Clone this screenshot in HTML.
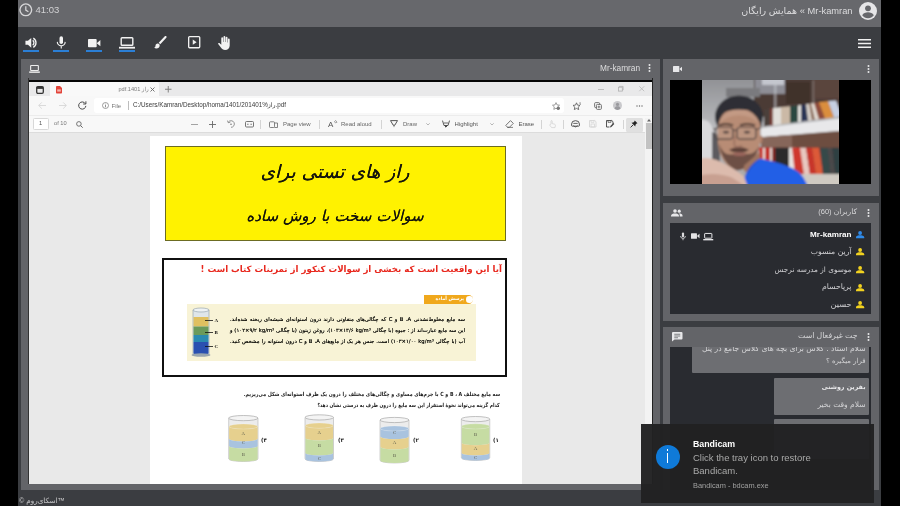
<!DOCTYPE html>
<html lang="fa">
<head>
<meta charset="utf-8">
<title>Skyroom</title>
<style>
*{box-sizing:border-box;margin:0;padding:0}
html,body{width:900px;height:506px;overflow:hidden;background:#000}
body{position:relative;font-family:"Liberation Sans","DejaVu Sans",sans-serif;color:#ddd;font-size:9px}
.abs{position:absolute}
#app{position:absolute;left:18px;top:0;width:863px;height:506px;background:#3b3d41;overflow:hidden;filter:blur(.45px)}
#notif{filter:blur(.4px)}
#topbar{position:absolute;left:0;top:0;width:863px;height:27px;background:#67686c}
#toolbar{position:absolute;left:0;top:27px;width:863px;height:32px;background:#3b3d41}
.panel{position:absolute;background:#636468}
.dark{position:absolute;background:#292b30}
.ul{position:absolute;height:2.200px;width:15.500px;top:23.300px;background:#2b7fd6}
svg{position:absolute;overflow:visible}
.rtl{direction:rtl;unicode-bidi:embed}
.t{position:absolute;white-space:nowrap;line-height:1}
</style>
</head>
<body>
<div id="app">
<!-- TOPBAR -->
<div id="topbar">
  <svg style="left:.6px;top:2.800px" width="13.600" height="13.600" viewBox="0 0 13 13"><circle cx="6.5" cy="6.5" r="5.6" fill="none" stroke="#d6d6d8" stroke-width="1.3"/><path d="M6.5 3.2V6.8L9 8.3" fill="none" stroke="#d6d6d8" stroke-width="1.2"/></svg>
  <div class="t" style="left:17.5px;top:5px;font-size:9.5px;color:#d2d2d4">41:03</div>
  <div class="t rtl" style="right:28.5px;top:5.5px;font-size:9.5px;color:#dcdcde"><span dir="ltr" style="font-size:9.300px">Mr-kamran</span> » همایش رایگان</div>
  <svg style="left:840.5px;top:1.5px" width="18" height="18" viewBox="0 0 18 18"><circle cx="9" cy="9" r="9" fill="#e6e6e8"/><circle cx="9" cy="6.3" r="2.9" fill="#67686c"/><path d="M3.2 13.2c1.2-2.2 3.4-3 5.8-3s4.6.8 5.8 3c-1.4 1.9-3.4 3-5.8 3s-4.4-1.100-5.800-3z" fill="#67686c"/></svg>
</div>
<!-- TOOLBAR -->
<div id="toolbar">
  <!-- speaker -->
  <svg style="left:6.800px;top:9.700px" width="12.500" height="11.600" viewBox="0 0 14 13"><path d="M0.500 4.300h2.800L7 1v11L3.300 8.700H0.500z" fill="#f2f2f2"/><path d="M8.600 3.800a3.300 3.300 0 0 1 0 5.400M9.300 1.300a6 6 0 0 1 0 10.400" fill="none" stroke="#f2f2f2" stroke-width="1.500"/></svg>
  <div class="ul" style="left:5px"></div>
  <!-- mic -->
  <svg style="left:38px;top:8.500px" width="10.500" height="13.500" viewBox="0 0 12 15"><rect x="4" y="0" width="4" height="9" rx="2" fill="#f2f2f2"/><path d="M1.500 6.500a4.500 4.500 0 0 0 9 0M6 11v3" fill="none" stroke="#f2f2f2" stroke-width="1.300"/></svg>
  <div class="ul" style="left:35px"></div>
  <!-- camera -->
  <svg style="left:70px;top:11.500px" width="12.400" height="8.400" viewBox="0 0 15 10"><rect x="0" y="0" width="10.500" height="10" rx="1" fill="#f2f2f2"/><path d="M10.500 5L15 1.200v7.600z" fill="#f2f2f2"/></svg>
  <div class="ul" style="left:68px"></div>
  <!-- laptop -->
  <svg style="left:101px;top:10px" width="16" height="12" viewBox="0 0 16 12"><rect x="2.200" y="0.700" width="11.600" height="7.600" rx="0.800" fill="none" stroke="#f2f2f2" stroke-width="1.400"/><rect x="0" y="9.800" width="16" height="1.800" fill="#f2f2f2"/></svg>
  <div class="ul" style="left:101px"></div>
  <!-- brush -->
  <svg style="left:136px;top:9px" width="13" height="13" viewBox="0 0 13 13"><path d="M12.300 0.300c.5.500.5 1 0 1.500L6.300 8.300 4.700 6.700 10.800 0.300c.5-.4 1-.4 1.500 0z" fill="#f2f2f2"/><path d="M3.700 7.600c1.200 0 2 .9 2 2 0 1.800-1.600 3-3.200 3-1 0-1.900-.4-2.500-1 .9 0 1.500-.700 1.500-1.800 0-1.200.9-2.200 2.200-2.200z" fill="#f2f2f2"/></svg>
  <!-- play box -->
  <svg style="left:169.700px;top:9.300px" width="12.400" height="12.400" viewBox="0 0 13 13"><rect x="0.700" y="0.700" width="11.600" height="11.600" rx="1" fill="none" stroke="#f2f2f2" stroke-width="1.400"/><path d="M5 3.800L9 6.500 5 9.200z" fill="#f2f2f2"/></svg>
  <!-- hand -->
  <svg style="left:199.500px;top:8.500px" width="13" height="14" viewBox="0 0 13 14"><path d="M3.300 2.200a.9.900 0 0 1 1.800 0V6h.4V1a.9.900 0 0 1 1.800 0v5h.4V1.700a.9.900 0 0 1 1.800 0V6.500h.4V3.500a.9.900 0 0 1 1.800 0V9.500c0 2.700-1.800 4.500-4.600 4.500-2 0-3.200-.8-4.200-2.400L.2 7.900c-.3-.6.500-1.300 1.200-.8l1.900 1.700z" fill="#f2f2f2"/></svg>
  <!-- hamburger -->
  <svg style="left:840px;top:11.500px" width="13" height="9" viewBox="0 0 13 9"><path d="M0 .8h13M0 4.500h13M0 8.200h13" stroke="#f0f0f0" stroke-width="1.500"/></svg>
</div>

<!-- MAIN PANEL -->
<div class="panel" id="main" style="left:3px;top:58.700px;width:638.700px;height:431.800px"></div>

<!-- main panel header -->
<svg style="left:11px;top:64.700px" width="11" height="8" viewBox="0 0 16 12"><rect x="2.200" y="0.700" width="11.600" height="7.600" rx="0.800" fill="none" stroke="#ececec" stroke-width="1.700"/><rect x="0" y="9.600" width="16" height="2.200" fill="#ececec"/></svg>
<div class="t" style="left:582px;top:63.500px;font-size:8.300px;color:#dededf">Mr-kamran</div>
<svg style="left:630px;top:63px" width="3" height="10" viewBox="0 0 3 10"><circle cx="1.500" cy="1.900" r="1" fill="#e8e8ea"/><circle cx="1.500" cy="5" r="1" fill="#e8e8ea"/><circle cx="1.500" cy="8.100" r="1" fill="#e8e8ea"/></svg>
<!-- BROWSER -->
<div id="br" class="abs" style="left:10px;top:78px;width:624.500px;height:405.500px;background:#f8f8f8;border-left:.5px solid #333;border-right:.8px solid #222;overflow:hidden;color:#444;font-size:6.200px">
 <div class="abs" style="left:-1px;top:0;width:627px;height:1.800px;background:#636468"></div>
 <div class="abs" style="left:-1px;top:1.800px;width:627px;height:2.200px;background:#060606"></div>
 <div class="abs" id="tabbar" style="left:0;top:3.600px;width:625px;height:14.400px;background:#e9e9ea"></div>
 <div class="abs" style="left:21px;top:4px;width:109px;height:13.500px;background:#f9f9f9;border-radius:2px 2px 0 0"></div>
 <div class="abs" id="addr" style="left:0;top:17.500px;width:623px;height:19px;background:#f8f8f8"></div>
 <div class="abs" style="left:65px;top:19.500px;width:470px;height:15px;background:#fff;border-radius:3px"></div>
 <div class="abs" id="ptb" style="left:0;top:36.500px;width:623px;height:18.500px;background:#f8f8f8;border-top:1px solid #ececec;border-bottom:1px solid #dcdcdc"></div>
 <div class="abs" id="pdfbg" style="left:0;top:55px;width:615.500px;height:350.500px;background:#e9e9e9"></div>
 <div class="abs" id="sb" style="left:615.500px;top:39.500px;width:8px;height:366px;background:#f3f3f3"></div>
 <div class="abs" style="left:616.500px;top:44.500px;width:6.500px;height:26px;background:#c2c2c2"></div>
 <svg style="left:6.50px;top:7.50px" width="8" height="8" viewBox="0 0 8 8"><rect x=".7" y=".7" width="6.600" height="6.600" rx="1.200" fill="none" stroke="#333" stroke-width="1.300"/><rect x=".7" y=".7" width="6.600" height="2.200" fill="#333"/></svg><svg style="left:27.00px;top:7.75px" width="6" height="7.5" viewBox="0 0 6 7.5"><path d="M0 .8Q0 0 .8 0H4L6 2V6.700Q6 7.500 5.200 7.500H.8Q0 7.500 0 6.700z" fill="#e2443a"/><rect x="1.200" y="3.400" width="3.600" height="2.200" fill="#f6b4ae"/></svg><div class="t rtl" style="left:89.500px;top:8.5px;font-size:5.600px;color:#7a7a7a;direction:ltr">pdf.1401 راز</div><svg style="left:121.00px;top:9.00px" width="5" height="5" viewBox="0 0 5 5"><path d="M.5 .5L4.500 4.500M4.500 .5L.5 4.500" stroke="#666" stroke-width=".9"/></svg><svg style="left:135.75px;top:8.25px" width="6.5" height="6.5" viewBox="0 0 6.5 6.5"><path d="M3.250 0V6.500M0 3.250H6.500" stroke="#777" stroke-width=".9"/></svg><svg style="left:568.50px;top:10.50px" width="6" height="1" viewBox="0 0 6 1"><path d="M0 .5H6" stroke="#b8b8b8" stroke-width=".9"/></svg><svg style="left:588.75px;top:8.25px" width="5.5" height="5.5" viewBox="0 0 5.5 5.5"><rect x=".4" y="1.200" width="3.900" height="3.900" fill="none" stroke="#b0b0b0" stroke-width=".8"/><path d="M1.500 1.200V.4H5.100V4H4.300" fill="none" stroke="#b0b0b0" stroke-width=".8"/></svg><svg style="left:609.75px;top:8.25px" width="5.5" height="5.5" viewBox="0 0 5.5 5.5"><path d="M.3 .3L5.200 5.200M5.200 .3L.3 5.200" stroke="#b8b8b8" stroke-width=".8"/></svg>
 <svg style="left:8.80px;top:24.00px" width="8" height="7" viewBox="0 0 8 7"><path d="M8 3.500H.8M3.800 .4L.7 3.500 3.800 6.600" fill="none" stroke="#d6d6d6" stroke-width=".9"/></svg><svg style="left:30.00px;top:24.00px" width="8" height="7" viewBox="0 0 8 7"><path d="M0 3.500H7.200M4.200 .4L7.300 3.500 4.200 6.600" fill="none" stroke="#d6d6d6" stroke-width=".9"/></svg><svg style="left:49.25px;top:23.25px" width="8.5" height="8.5" viewBox="0 0 8.5 8.5"><path d="M7.300 2.600A3.600 3.600 0 1 0 7.850 4.900" fill="none" stroke="#4a4a4a" stroke-width="1"/><path d="M7.900 .3V3H5.200" fill="none" stroke="#4a4a4a" stroke-width="1"/></svg><svg style="left:72.50px;top:24.00px" width="7" height="7" viewBox="0 0 7 7"><circle cx="3.500" cy="3.500" r="3" fill="none" stroke="#777" stroke-width=".7"/><path d="M3.500 3V5.300M3.500 1.700V2.400" stroke="#777" stroke-width=".8"/></svg><div class="t" style="left:82.5px;top:24.50px;font-size:6px;color:#777;">File</div><div class="abs" style="left:98.5px;top:23.0px;width:1px;height:9px;background:#bdbdbd"></div><div class="t" style="left:104px;top:24.2px;font-size:6.300px;color:#3a3a3a;direction:ltr">C:/Users/Kamran/Desktop/homa/1401/201401%راز.pdf</div><svg style="left:523.00px;top:23.50px" width="8" height="8" viewBox="0 0 8 8"><path d="M4 .6L5 2.900 7.500 3.200 5.700 4.900 6.200 7.400 4 6.200 1.800 7.400 2.300 4.900 .5 3.200 3 2.900z" fill="none" stroke="#777" stroke-width=".7"/><circle cx="6.300" cy="6.200" r="1.700" fill="#777"/></svg><svg style="left:543.50px;top:23.50px" width="8" height="8" viewBox="0 0 8 8"><path d="M3.500 .8L4.500 3.100 7 3.400 5.200 5.100 5.700 7.600 3.500 6.400 1.300 7.600 1.800 5.100 0 3.400 2.500 3.100z" fill="none" stroke="#555" stroke-width=".8"/><path d="M6.200 1H8M6.800 2.300H8" stroke="#555" stroke-width=".6"/></svg><svg style="left:564.50px;top:23.50px" width="8" height="8" viewBox="0 0 8 8"><rect x=".6" y=".6" width="5" height="5" rx="1" fill="none" stroke="#555" stroke-width=".8"/><rect x="2.400" y="2.400" width="5" height="5" rx="1" fill="#f8f8f8" stroke="#555" stroke-width=".8"/><path d="M4.900 3.600V6.200M3.600 4.900H6.200" stroke="#555" stroke-width=".7"/></svg><svg style="left:584.00px;top:23.00px" width="9" height="9" viewBox="0 0 9 9"><circle cx="4.500" cy="4.500" r="4.500" fill="#c9c9cc"/><circle cx="4.500" cy="3.400" r="1.600" fill="#9a9a9e"/><path d="M1.500 7.600C2 5.700 3.200 5.300 4.500 5.300S7 5.700 7.500 7.600A4.300 4.300 0 0 1 1.500 7.600z" fill="#9a9a9e"/></svg><svg style="left:607.00px;top:26.50px" width="7" height="2" viewBox="0 0 7 2"><circle cx="1" cy="1" r=".7" fill="#666"/><circle cx="3.500" cy="1" r=".7" fill="#666"/><circle cx="6" cy="1" r=".7" fill="#666"/></svg>
 <div class="abs" style="left:4px;top:39.800px;width:15.500px;height:12.400px;background:#fff;border:1px solid #d8d8d8;border-radius:1.500px"></div><div class="t" style="left:10px;top:43.400px;font-size:5.800px;color:#555;">1</div><div class="t" style="left:25px;top:43.400px;font-size:5.700px;color:#777;">of 10</div><svg style="left:46.50px;top:42.50px" width="7" height="7" viewBox="0 0 7 7"><circle cx="2.900" cy="2.900" r="2.300" fill="none" stroke="#666" stroke-width=".9"/><path d="M4.600 4.600L6.700 6.700" stroke="#666" stroke-width="1"/></svg><svg style="left:162.00px;top:45.50px" width="7" height="1" viewBox="0 0 7 1"><path d="M0 .5H7" stroke="#999" stroke-width=".9"/></svg><svg style="left:180.00px;top:42.50px" width="7" height="7" viewBox="0 0 7 7"><path d="M0 3.500H7M3.500 0V7" stroke="#666" stroke-width=".9"/></svg><svg style="left:197.50px;top:42.00px" width="8" height="8" viewBox="0 0 8 8"><path d="M1.300 2.200A3.300 3.300 0 1 1 4 7.300" fill="none" stroke="#777" stroke-width=".8"/><path d="M.5 .6L1.200 2.700 3.300 2.200" fill="none" stroke="#777" stroke-width=".8"/><circle cx="4" cy="4.200" r=".8" fill="#777"/></svg><svg style="left:215.50px;top:42.75px" width="9" height="6.5" viewBox="0 0 9 6.5"><rect x=".5" y=".5" width="8" height="5.500" rx="1" fill="none" stroke="#666" stroke-width=".9"/><path d="M2 3.250H3.600M5.400 3.250H7" stroke="#666" stroke-width=".8"/></svg><div class="abs" style="left:231px;top:41.5px;width:1px;height:9px;background:#d4d4d4"></div><svg style="left:239.50px;top:42.50px" width="9" height="7" viewBox="0 0 9 7"><rect x=".5" y=".8" width="5" height="5.700" rx=".8" fill="none" stroke="#666" stroke-width=".8"/><path d="M5.500 2H8.500V6.500H5.500" fill="none" stroke="#666" stroke-width=".8"/></svg><div class="t" style="left:254px;top:43.400px;font-size:6px;color:#666;">Page view</div><div class="abs" style="left:289.5px;top:41.5px;width:1px;height:9px;background:#d4d4d4"></div><svg style="left:298.50px;top:42.25px" width="9" height="7.5" viewBox="0 0 9 7.5"><text x="0" y="6.800" font-size="8" fill="#555" font-family="Liberation Sans,sans-serif">A</text><path d="M6.300 1.200A2 2 0 0 1 7.300 3.200M7.300 .2A3.500 3.500 0 0 1 8.800 3" fill="none" stroke="#555" stroke-width=".6"/></svg><div class="t" style="left:312px;top:43.400px;font-size:6px;color:#666;">Read aloud</div><div class="abs" style="left:351.5px;top:41.5px;width:1px;height:9px;background:#d4d4d4"></div><svg style="left:361.00px;top:42.00px" width="8" height="8" viewBox="0 0 8 8"><path d="M.5 .6H7.500L4.800 5.200H3.200z" fill="none" stroke="#444" stroke-width=".9"/><path d="M3.400 5.400L4 7.600 4.600 5.400" fill="#444"/></svg><div class="t" style="left:374px;top:43.400px;font-size:6px;color:#666;">Draw</div><svg style="left:397.00px;top:44.75px" width="4" height="2.5" viewBox="0 0 4 2.5"><path d="M.3 .3L2 2 3.700 .3" fill="none" stroke="#999" stroke-width=".7"/></svg><svg style="left:412.50px;top:42.00px" width="8" height="8" viewBox="0 0 8 8"><path d="M.5 .6L2 5.500H6L7.500 .6" fill="none" stroke="#444" stroke-width=".9"/><path d="M2 3H6" stroke="#444" stroke-width=".8"/><path d="M3 5.500V7.500L5 6.800V5.500" fill="#444"/></svg><div class="t" style="left:425.5px;top:43.400px;font-size:6px;color:#555;">Highlight</div><svg style="left:461.00px;top:44.75px" width="4" height="2.5" viewBox="0 0 4 2.5"><path d="M.3 .3L2 2 3.700 .3" fill="none" stroke="#999" stroke-width=".7"/></svg><svg style="left:475.50px;top:42.00px" width="9" height="8" viewBox="0 0 9 8"><path d="M5.500 .6L8.300 3.400 4.400 7.300H2.600L.8 5.400z" fill="none" stroke="#555" stroke-width=".8"/><path d="M2.200 7.400H8" stroke="#555" stroke-width=".7"/></svg><div class="t" style="left:489.5px;top:43.400px;font-size:6px;color:#555;">Erase</div><div class="abs" style="left:511.5px;top:41.5px;width:1px;height:9px;background:#d4d4d4"></div><svg style="left:520.00px;top:41.50px" width="7" height="8" viewBox="0 0 7 8"><path d="M2 4V1.200a.6.6 0 0 1 1.200 0V3.600L5.600 4.200c.6.200.9.600.8 1.200L6 7.600H2.600L.8 5.200c-.3-.5.300-1 .8-.6z" fill="none" stroke="#cfcfcf" stroke-width=".7"/></svg><div class="abs" style="left:534px;top:41.5px;width:1px;height:9px;background:#d4d4d4"></div><svg style="left:542.00px;top:42.00px" width="9" height="8" viewBox="0 0 9 8"><path d="M.6 4A3.500 3 0 0 1 8.400 4V5.500Q8.400 6.200 7.600 6.200H1.400Q.6 6.200 .6 5.500z" fill="none" stroke="#444" stroke-width=".9"/><path d="M2.300 3.400H6.700" stroke="#444" stroke-width=".8"/><path d="M2.600 5.400C3.500 7.400 5.500 7.400 6.400 5.400" fill="none" stroke="#444" stroke-width=".8"/></svg><svg style="left:560.25px;top:42.25px" width="7.5" height="7.5" viewBox="0 0 7.5 7.5"><path d="M.5 .5H5.800L7 1.700V7H.5z" fill="none" stroke="#d2d2d2" stroke-width=".8"/><rect x="2" y="4" width="3.500" height="3" fill="none" stroke="#d2d2d2" stroke-width=".7"/><path d="M2 .5V2.300H5V.5" fill="none" stroke="#d2d2d2" stroke-width=".7"/></svg><svg style="left:577.25px;top:42.00px" width="8.5" height="8" viewBox="0 0 8.5 8"><path d="M.5 .5H5.800L7 1.700V4M3.500 7H.5V.5" fill="none" stroke="#444" stroke-width=".9"/><path d="M2 .5V2.300H5V.5" fill="none" stroke="#444" stroke-width=".7"/><path d="M4 7.600L4.400 6 7.300 3.100 8.300 4.100 5.400 7z" fill="#444"/></svg><div class="abs" style="left:593.5px;top:41.5px;width:1px;height:9px;background:#d4d4d4"></div><div class="abs" style="left:596.500px;top:39.500px;width:17.500px;height:14px;background:#e0e0e0;border-radius:1.500px"></div><svg style="left:601.00px;top:42.00px" width="8" height="8" viewBox="0 0 8 8"><path d="M4.700 .5L7.500 3.300 6.600 3.600 5.500 4.700 5.300 6.500 1.500 2.700 3.300 2.500 4.400 1.400z" fill="#222"/><path d="M3 5L.6 7.400" stroke="#222" stroke-width=".9"/></svg><svg style="left:617.50px;top:41.25px" width="4" height="2.5" viewBox="0 0 4 2.5"><path d="M0 2.500L2 0 4 2.500z" fill="#666"/></svg>
 <div id="pg" class="abs" style="left:121px;top:58px;width:372px;height:348px;background:#fff;font-family:'DejaVu Sans','Liberation Sans',sans-serif">
  <div class="abs" style="left:14.500px;top:9.500px;width:341px;height:95.500px;background:#fff200;border:1px solid #6c6c22"></div>
  <div class="t rtl" id="t1" style="left:14.500px;width:341px;text-align:center;top:27px;font-size:18.600px;color:#15150c;font-style:italic;text-shadow:0 0 .5px #15150c">راز های تستی برای</div>
  <div class="t rtl" id="t2" style="left:14.500px;width:341px;text-align:center;top:73px;font-size:15.100px;color:#15150c;font-style:italic;text-shadow:0 0 .5px #15150c">سوالات سخت با روش ساده</div>
  <div class="abs" style="left:12px;top:122px;width:345px;height:119px;border:2.200px solid #101010;background:#fff"></div>
  <div class="t rtl" id="rh" style="right:20px;top:128.500px;font-size:8.640px;font-weight:bold;color:#e8281e">آیا این واقعیت است که بخشی از سوالات کنکور از تمرینات کتاب است !</div>
  <div class="abs" style="left:36.500px;top:167.500px;width:289px;height:57.500px;background:#f8f3d6"></div>
  <div class="abs" style="left:274px;top:158.500px;width:49px;height:9.500px;background:#f0a81c;border-radius:0 5px 5px 0"></div>
  <div class="abs" style="left:316px;top:160px;width:6.500px;height:6.500px;background:#fff;border-radius:50%"></div>
  <div class="t rtl" style="right:58px;top:160.500px;font-size:4.600px;font-weight:bold;color:#fff">پرسش آماده</div>
  <div class="t rtl" id="c1" style="right:57px;width:235px;text-align:justify;text-align-last:justify;top:180.500px;font-size:5.300px;color:#14140f;text-shadow:0 0 .35px #14140f">سه مایع مخلوط‌نشدنی <span dir="ltr">A</span>، <span dir="ltr">B</span> و <span dir="ltr">C</span> که چگالی‌های متفاوتی دارند درون استوانه‌ای شیشه‌ای ریخته شده‌اند.</div>
  <div class="t rtl" id="c2" style="right:57px;width:235px;text-align:justify;text-align-last:justify;top:191.500px;font-size:5.300px;color:#14140f;text-shadow:0 0 .35px #14140f">این سه مایع عبارت‌اند از : جیوه (با چگالی <span dir="ltr">kg/m³</span> ۱۳/۶×۱۰۳)، روغن زیتون (با چگالی <span dir="ltr">kg/m³</span> ۹/۲×۱۰۲) و</div>
  <div class="t rtl" id="c3" style="right:57px;width:235px;text-align:justify;text-align-last:justify;top:202.500px;font-size:5.300px;color:#14140f;text-shadow:0 0 .35px #14140f">آب (با چگالی <span dir="ltr">kg/m³</span> ۱/۰۰×۱۰۳) است. جنس هر یک از مایع‌های <span dir="ltr">A</span>، <span dir="ltr">B</span> و <span dir="ltr">C</span> درون استوانه را مشخص کنید.</div>
  <div class="t rtl" id="q1" style="right:22px;top:255.500px;font-size:5.600px;transform:scaleX(.843);transform-origin:100% 50%;font-weight:bold;color:#1c1c1c">سه مایع مختلف <span dir="ltr">A</span> ، <span dir="ltr">B</span> و <span dir="ltr">C</span> با جرم‌های مساوی و چگالی‌های مختلف را درون یک ظرف استوانه‌ای شکل می‌ریزیم.</div>
  <div class="t rtl" id="q2" style="right:22px;top:266.500px;font-size:5.600px;transform:scaleX(.797);transform-origin:100% 50%;font-weight:bold;color:#1c1c1c">کدام گزینه می‌تواند نحوهٔ استقرار این سه مایع را درون ظرف به درستی نشان دهد؟</div>
  <div class="t rtl" style="left:343px;top:302px;font-size:5.500px;font-weight:bold;color:#222">۱)</div>
  <div class="t rtl" style="left:263px;top:302px;font-size:5.500px;font-weight:bold;color:#222">۲)</div>
  <div class="t rtl" style="left:188px;top:302px;font-size:5.500px;font-weight:bold;color:#222">۳)</div>
  <div class="t rtl" style="left:111px;top:302px;font-size:5.500px;font-weight:bold;color:#222">۴)</div>
  <svg style="left:0;top:0" width="372" height="348" viewBox="0 0 372 348"><g><path d="M78.7 282.1V322.9A14.65 2.6 0 0 0 108.0 322.9V282.1z" fill="#ececec" stroke="#b4b4b4" stroke-width=".6"/><path d="M79.10000000000001 290.5V302.8A14.25 2.6 0 0 0 107.6 302.8V290.5A14.25 2.6 0 0 1 79.10000000000001 290.5z" fill="#e6d08e"/><path d="M79.10000000000001 302.8V309.9A14.25 2.6 0 0 0 107.6 309.9V302.8A14.25 2.6 0 0 1 79.10000000000001 302.8z" fill="#a9c3df"/><path d="M79.10000000000001 309.9V322.9A14.25 2.6 0 0 0 107.6 322.9V309.9A14.25 2.6 0 0 1 79.10000000000001 309.9z" fill="#c6dca3"/><ellipse cx="93.35000000000001" cy="290.5" rx="14.25" ry="2.6" fill="#e6d08e" stroke="#fff" stroke-opacity=".35" stroke-width=".5"/><ellipse cx="93.35000000000001" cy="282.1" rx="14.65" ry="2.6" fill="#f4f4f4" stroke="#a8a8a8" stroke-width=".7"/></g><g><path d="M155 281.40000000000003V322.9A14.25 2.6 0 0 0 183.5 322.9V281.40000000000003z" fill="#ececec" stroke="#b4b4b4" stroke-width=".6"/><path d="M155.4 289.6V301.9A13.85 2.6 0 0 0 183.1 301.9V289.6A13.85 2.6 0 0 1 155.4 289.6z" fill="#e6d08e"/><path d="M155.4 301.9V317A13.85 2.6 0 0 0 183.1 317V301.9A13.85 2.6 0 0 1 155.4 301.9z" fill="#c6dca3"/><path d="M155.4 317V322.9A13.85 2.6 0 0 0 183.1 322.9V317A13.85 2.6 0 0 1 155.4 317z" fill="#a9c3df"/><ellipse cx="169.25" cy="289.6" rx="13.85" ry="2.6" fill="#e6d08e" stroke="#fff" stroke-opacity=".35" stroke-width=".5"/><ellipse cx="169.25" cy="281.40000000000003" rx="14.25" ry="2.6" fill="#f4f4f4" stroke="#a8a8a8" stroke-width=".7"/></g><g><path d="M230 284.0V324.4A14.5 2.6 0 0 0 259 324.4V284.0z" fill="#ececec" stroke="#b4b4b4" stroke-width=".6"/><path d="M230.4 292.5V300.6A14.1 2.6 0 0 0 258.6 300.6V292.5A14.1 2.6 0 0 1 230.4 292.5z" fill="#a9c3df"/><path d="M230.4 300.6V310.8A14.1 2.6 0 0 0 258.6 310.8V300.6A14.1 2.6 0 0 1 230.4 300.6z" fill="#e6d08e"/><path d="M230.4 310.8V324.4A14.1 2.6 0 0 0 258.6 324.4V310.8A14.1 2.6 0 0 1 230.4 310.8z" fill="#c6dca3"/><ellipse cx="244.5" cy="292.5" rx="14.1" ry="2.6" fill="#a9c3df" stroke="#fff" stroke-opacity=".35" stroke-width=".5"/><ellipse cx="244.5" cy="284.0" rx="14.5" ry="2.6" fill="#f4f4f4" stroke="#a8a8a8" stroke-width=".7"/></g><g><path d="M311.3 283.1V321.9A14.25 2.6 0 0 0 339.8 321.9V283.1z" fill="#ececec" stroke="#b4b4b4" stroke-width=".6"/><path d="M311.7 290.4V306.7A13.85 2.6 0 0 0 339.40000000000003 306.7V290.4A13.85 2.6 0 0 1 311.7 290.4z" fill="#c6dca3"/><path d="M311.7 306.7V317A13.85 2.6 0 0 0 339.40000000000003 317V306.7A13.85 2.6 0 0 1 311.7 306.7z" fill="#e6d08e"/><path d="M311.7 317V321.9A13.85 2.6 0 0 0 339.40000000000003 321.9V317A13.85 2.6 0 0 1 311.7 317z" fill="#a9c3df"/><ellipse cx="325.55" cy="290.4" rx="13.85" ry="2.6" fill="#c6dca3" stroke="#fff" stroke-opacity=".35" stroke-width=".5"/><ellipse cx="325.55" cy="283.1" rx="14.25" ry="2.6" fill="#f4f4f4" stroke="#a8a8a8" stroke-width=".7"/></g><text x="93.3" y="298.5" font-size="4.800" text-anchor="middle" fill="#5a5a4a" font-family="Liberation Serif,serif">A</text><text x="93.3" y="308" font-size="4.800" text-anchor="middle" fill="#5a5a4a" font-family="Liberation Serif,serif">C</text><text x="93.3" y="319.5" font-size="4.800" text-anchor="middle" fill="#5a5a4a" font-family="Liberation Serif,serif">B</text><text x="169.3" y="297.5" font-size="4.800" text-anchor="middle" fill="#5a5a4a" font-family="Liberation Serif,serif">A</text><text x="169.3" y="311" font-size="4.800" text-anchor="middle" fill="#5a5a4a" font-family="Liberation Serif,serif">B</text><text x="169.3" y="323.5" font-size="4.800" text-anchor="middle" fill="#5a5a4a" font-family="Liberation Serif,serif">C</text><text x="244.5" y="298" font-size="4.800" text-anchor="middle" fill="#5a5a4a" font-family="Liberation Serif,serif">C</text><text x="244.5" y="307.5" font-size="4.800" text-anchor="middle" fill="#5a5a4a" font-family="Liberation Serif,serif">A</text><text x="244.5" y="320.5" font-size="4.800" text-anchor="middle" fill="#5a5a4a" font-family="Liberation Serif,serif">B</text><text x="325.5" y="300" font-size="4.800" text-anchor="middle" fill="#5a5a4a" font-family="Liberation Serif,serif">B</text><text x="325.5" y="313.5" font-size="4.800" text-anchor="middle" fill="#5a5a4a" font-family="Liberation Serif,serif">A</text><text x="325.5" y="322.8" font-size="4.800" text-anchor="middle" fill="#5a5a4a" font-family="Liberation Serif,serif">C</text><g><path d="M43 174V217.500A8 2 0 0 0 59 217.500V174z" fill="#dfe6ea" stroke="#8a9aa6" stroke-width=".6"/><rect x="43.500" y="181" width="15" height="9.500" fill="#e0c060"/><rect x="43.500" y="190.500" width="15" height="8.500" fill="#6a9a5a"/><rect x="43.500" y="199" width="15" height="7" fill="#2a8ab0"/><path d="M43.500 206V217.300A7.500 1.800 0 0 0 58.500 217.300V206z" fill="#2a50b0"/><ellipse cx="51" cy="174" rx="8" ry="2" fill="#eef2f4" stroke="#8a9aa6" stroke-width=".6"/><ellipse cx="51" cy="219" rx="9.500" ry="1.800" fill="#9aa6ae"/><path d="M55 184.500H63M55 196.500H63M55 210.500H63" stroke="#111" stroke-width=".8"/></g><text x="64.500" y="186.300" font-size="5" font-weight="bold" fill="#111" font-family="Liberation Serif,serif">A</text><text x="64.500" y="198.300" font-size="5" font-weight="bold" fill="#111" font-family="Liberation Serif,serif">B</text><text x="64.500" y="212.300" font-size="5" font-weight="bold" fill="#111" font-family="Liberation Serif,serif">C</text></svg>
</div>
</div>
<!-- RIGHT PANELS -->
<div class="panel" id="vid" style="left:645px;top:58.700px;width:215.500px;height:137.800px"></div>
<div class="panel" id="users" style="left:645px;top:202.500px;width:215.500px;height:118px"></div>
<div class="panel" id="chat" style="left:645px;top:327px;width:215.500px;height:163px"></div>
<svg style="left:654.700px;top:66px" width="9" height="6" viewBox="0 0 15 10"><rect x="0" y="0" width="10.500" height="10" rx="1" fill="#e8e8ea"/><path d="M10.500 5L15 1.200v7.600z" fill="#e8e8ea"/></svg><svg style="left:848.5px;top:63.5px" width="3" height="10" viewBox="0 0 3 10"><circle cx="1.500" cy="1.900" r="1" fill="#e8e8ea"/><circle cx="1.500" cy="5" r="1" fill="#e8e8ea"/><circle cx="1.500" cy="8.100" r="1" fill="#e8e8ea"/></svg><div class="abs" style="left:651.500px;top:79.600px;width:201.500px;height:104px;background:#000"></div><svg style="left:684px;top:79.600px" width="137" height="104" viewBox="0 0 137 104.500" preserveAspectRatio="none">
<defs><filter id="bl" x="-5%" y="-5%" width="110%" height="110%"><feGaussianBlur stdDeviation="1.100"/></filter>
<clipPath id="cp"><rect x="0" y="0" width="137" height="104.500"/></clipPath>
<linearGradient id="wall" x1="0" y1="0" x2="0" y2="1"><stop offset="0" stop-color="#8f9094"/><stop offset=".45" stop-color="#b9babd"/><stop offset="1" stop-color="#a9a6a6"/></linearGradient>
</defs>
<g clip-path="url(#cp)"><g filter="url(#bl)">
<rect x="-3" y="-3" width="143" height="111" fill="url(#wall)"/>
<!-- upper shelf back (brown) -->
<rect x="52" y="-3" width="88" height="40" fill="#4c3b35"/>
<rect x="53" y="-3" width="30" height="17" fill="#8e8e96"/>
<rect x="60" y="-3" width="22" height="8" fill="#c4c6ce"/>
<rect x="24" y="8" width="34" height="9" fill="#7a7a7e"/>
<rect x="72" y="0" width="2.500" height="30" fill="#c5c8d0" opacity=".55"/>
<rect x="110.500" y="0" width="2" height="24" fill="#b8b0b0" opacity=".45"/>
<rect x="84" y="2" width="24" height="22" fill="#40302c"/>
<rect x="112" y="-3" width="28" height="22" fill="#5a443c"/>
<!-- books row 1 -->
<path d="M62 29.5L68 28.8L68 45.8L62 46.6z" fill="#4c3f3a"/><path d="M68 28.8L71 28.5L71 45.4L68 45.8z" fill="#7c3c36"/><path d="M71 28.5L79 27.5L79 44.4L71 45.4z" fill="#e2dfda"/><path d="M79 27.5L88 26.5L88 43.2L79 44.4z" fill="#cbb9a6"/><path d="M88 26.5L96 25.6L96 42.2L88 43.2z" fill="#2b4741"/><path d="M96 25.6L99 25.2L99 41.8L96 42.2z" fill="#e4e2de"/><path d="M99 25.2L106 24.4L106 40.9L99 41.8z" fill="#2c3654"/><path d="M104 24.4L108 23.9L110 40.3L106 40.9z" fill="#d9d1c9"/><path d="M107 23.9L110 23.6L113 39.9L110 40.3z" fill="#8a6a58"/><path d="M109 23.6L113 23.1L117 39.4L113 39.9z" fill="#e2dad2"/><path d="M112 23.1L118 22.4L123 38.6L117 39.4z" fill="#8f4b3a"/><path d="M117 22.4L126 21.4L132 37.5L123 38.6z" fill="#da8e3c"/><path d="M126 21.4L134 20.5L140 36.4L132 37.5z" fill="#c6cfe2"/>
<!-- white shelf -->
<path d="M59 48.500L140 38.500V51L59 57.500z" fill="#e8e8ea"/>
<path d="M59 57.500L140 51V69H59z" fill="#6d4d40"/>
<path d="M59 57.500L90 55V69H59z" fill="#86665a"/>
<!-- books row 2 -->
<rect x="57" y="68" width="84" height="27" fill="#7a3a34"/>
<path d="M57 68H61L61 95H57z" fill="#c9302c"/><path d="M61 68H63L63 95H61z" fill="#e8dcd6"/><path d="M63 68H68L68 95H63z" fill="#c4302c"/><path d="M68 68H70L70 95H68z" fill="#e6dcd6"/><path d="M70 68H73L73 95H70z" fill="#8a2a28"/><path d="M73 68H87L87 95H73z" fill="#2a2a2c"/><path d="M87 68H93L93 95H87z" fill="#e8e4e0"/><path d="M90 68H99L102 95H93z" fill="#cf382e"/><path d="M98 68H104L108 95H102z" fill="#e8c8c0"/><path d="M104 68H110L114 95H108z" fill="#c8342c"/><path d="M110 68H117L121 95H114z" fill="#dc5a38"/><path d="M118 68H126L129 95H121z" fill="#35484a"/><path d="M126 68H130L133 95H129z" fill="#4a4a4c"/><path d="M130 68H138L141 95H133z" fill="#2f4042"/>
<rect x="56" y="94.500" width="84" height="14" fill="#cfcac2"/>
<!-- left light object -->
<path d="M-3 40Q8 38 11 50V82H-3z" fill="#d9d9db"/>

<!-- head -->
<path d="M10 52V84H18V56z" fill="#5b5a5e"/>
<ellipse cx="37" cy="37" rx="24" ry="21.500" fill="#2d2f36"/>
<path d="M15.500 42Q16 28 37 28Q58 28 58.500 44L57.500 66Q55 83 44 89Q37 92 30 89Q18 82 16 64z" fill="#b88c75"/>
<path d="M17 44Q22 30 37 29.500Q52 30 57 44Q50 36 37 35.500Q24 36 17 44z" fill="#c39a84"/>
<path d="M15 36Q24 26 37 26.500Q52 26 60 37L59.500 48Q56 35 46 30.500Q32 28 23 32.500Q17 37 15.500 50z" fill="#2d2f36"/>
<path d="M17 64Q20 84 35 91Q50 89 57.500 66Q52 76 44 74Q38 71 32 74Q22 78 17 64z" fill="#6d5045"/>
<path d="M27 70Q37 65 47 70Q44 73 37 72.500Q30 73 27 70z" fill="#5b4038"/>
<ellipse cx="37.500" cy="74.500" rx="7" ry="1.800" fill="#9a655c"/>
<path d="M17 45.500Q24 43 31 45.500M38 45.500Q45 43 53 45.500" stroke="#3a2e2c" stroke-width="1.800" fill="none"/>
<ellipse cx="24" cy="52.500" rx="3" ry="1.500" fill="#3a2c28"/><ellipse cx="45" cy="52.500" rx="3" ry="1.500" fill="#3a2c28"/>
<path d="M11 49.500L14 49M31 51Q33 49.500 35 51M54 50L59 48" stroke="#4a4040" stroke-width="1.200" fill="none"/>
<rect x="13.500" y="47.500" width="17.500" height="12" rx="3.500" fill="#c8b0a4" fill-opacity=".25" stroke="#4a3f3e" stroke-width="1.200"/>
<rect x="35" y="47.500" width="19" height="12" rx="3.500" fill="#c8b0a4" fill-opacity=".25" stroke="#4a3f3e" stroke-width="1.200"/>
<path d="M33 57Q31.500 64 33 66.500Q36 68 40 66" stroke="#9a7060" stroke-width="1.600" fill="none"/>
<path d="M58 56Q61 55 60.500 60Q60 64 57.500 64z" fill="#b08068"/>
<!-- neck -->
<path d="M42 86L58 72V92H42z" fill="#9f7460"/>
<!-- shirt -->
<path d="M38 108L45 92Q52 82 58 79Q84 84 96 92Q103 98 106 108z" fill="#235fe6"/>
<path d="M43 97Q49 86 58 79Q51 82 45 92z" fill="#1a45ae"/>
<!-- arm -->
<path d="M-3 79Q8 77 18 82Q32 89 42 97L46 108H-3z" fill="#dcbbad"/>
<path d="M-3 96Q14 92 30 98L45 108H-3z" fill="#c8a091"/>
</g></g></svg><svg style="left:653px;top:208.500px" width="11.500" height="8" viewBox="0 0 23 16"><circle cx="8" cy="4" r="3.600" fill="#e8e8ea"/><circle cx="16.500" cy="4.300" r="3.100" fill="#e8e8ea"/><path d="M0 15V13C0 10 4.500 8.800 8 8.800S16 10 16 13V15z" fill="#e8e8ea"/><path d="M17.500 15V12.600C17.500 11 16.800 9.900 15.700 9.100 19 9 23 10.200 23 12.800V15z" fill="#e8e8ea"/></svg><div class="t rtl" style="right:24px;top:208.200px;font-size:7.500px;color:#d6d6d8">کاربران (60)</div><svg style="left:848.5px;top:207.5px" width="3" height="10" viewBox="0 0 3 10"><circle cx="1.500" cy="1.900" r="1" fill="#e8e8ea"/><circle cx="1.500" cy="5" r="1" fill="#e8e8ea"/><circle cx="1.500" cy="8.100" r="1" fill="#e8e8ea"/></svg><div class="dark" style="left:651.500px;top:222.500px;width:201.500px;height:91px"></div><svg style="left:661.500px;top:232.200px" width="6" height="9" viewBox="0 0 12 16"><rect x="3.800" y="0" width="4.400" height="9.500" rx="2.200" fill="#dcdcde"/><path d="M1.200 7a4.800 4.800 0 0 0 9.600 0M6 12v3.500" fill="none" stroke="#dcdcde" stroke-width="1.700"/></svg><svg style="left:672.500px;top:233.200px" width="8.500" height="6" viewBox="0 0 15 10"><rect x="0" y="0" width="10.500" height="10" rx="1" fill="#e4e4e6"/><path d="M10.500 5L15 1.200v7.600z" fill="#e4e4e6"/></svg><svg style="left:684.500px;top:232.700px" width="10.500" height="7.500" viewBox="0 0 16 12"><rect x="2.200" y="0.700" width="11.600" height="7.600" rx="0.800" fill="none" stroke="#e4e4e6" stroke-width="1.600"/><rect x="0" y="9.600" width="16" height="2.200" fill="#e4e4e6"/></svg><svg style="left:838px;top:231.0px" width="8.200" height="7.300" viewBox="0 0 9 8"><circle cx="4.500" cy="2.200" r="2.100" fill="#2f8bea"/><path d="M0 8V6.800C0 5.200 2.600 4.600 4.500 4.600S9 5.200 9 6.800V8z" fill="#2f8bea"/></svg><div class="t" style="right:29.500px;top:230.6px;font-size:8.1px;font-weight:bold;color:#fff"><span dir="ltr">Mr-kamran</span></div><svg style="left:838px;top:248.2px" width="8.200" height="7.300" viewBox="0 0 9 8"><circle cx="4.500" cy="2.200" r="2.100" fill="#f2d21f"/><path d="M0 8V6.800C0 5.200 2.600 4.600 4.500 4.600S9 5.200 9 6.800V8z" fill="#f2d21f"/></svg><div class="t rtl" style="right:29.500px;top:247.9px;font-size:7.7px;color:#cfcfd2;font-family:'DejaVu Sans',sans-serif">آرین منسوب</div><svg style="left:838px;top:266.1px" width="8.200" height="7.300" viewBox="0 0 9 8"><circle cx="4.500" cy="2.200" r="2.100" fill="#f2d21f"/><path d="M0 8V6.800C0 5.200 2.600 4.600 4.500 4.600S9 5.200 9 6.800V8z" fill="#f2d21f"/></svg><div class="t rtl" style="right:29.500px;top:266.1px;font-size:7.3px;color:#cfcfd2;font-family:'DejaVu Sans',sans-serif">موسوی از مدرسه نرجس</div><svg style="left:838px;top:283.7px" width="8.200" height="7.300" viewBox="0 0 9 8"><circle cx="4.500" cy="2.200" r="2.100" fill="#f2d21f"/><path d="M0 8V6.800C0 5.200 2.600 4.600 4.500 4.600S9 5.200 9 6.800V8z" fill="#f2d21f"/></svg><div class="t rtl" style="right:29.500px;top:283.4px;font-size:7.7px;color:#cfcfd2;font-family:'DejaVu Sans',sans-serif">پریاحسام</div><svg style="left:838px;top:300.9px" width="8.200" height="7.300" viewBox="0 0 9 8"><circle cx="4.500" cy="2.200" r="2.100" fill="#f2d21f"/><path d="M0 8V6.800C0 5.200 2.600 4.600 4.500 4.600S9 5.200 9 6.800V8z" fill="#f2d21f"/></svg><div class="t rtl" style="right:29.500px;top:300.3px;font-size:8.2px;color:#cfcfd2;font-family:'DejaVu Sans',sans-serif">حسین</div><svg style="left:653.500px;top:332px" width="10.500" height="9.500" viewBox="0 0 21 19"><path d="M2 0H19Q21 0 21 2V13Q21 15 19 15H5L0 19V2Q0 0 2 0z" fill="#e8e8ea"/><path d="M4.500 4.500H16.500M4.500 8H16.500M4.500 11.500H12" stroke="#636468" stroke-width="1.600"/></svg><div class="t rtl" style="right:23.500px;top:331.700px;font-size:7.800px;color:#d6d6d8">چت غیرفعال است</div><svg style="left:848.5px;top:331.5px" width="3" height="10" viewBox="0 0 3 10"><circle cx="1.500" cy="1.900" r="1" fill="#e8e8ea"/><circle cx="1.500" cy="5" r="1" fill="#e8e8ea"/><circle cx="1.500" cy="8.100" r="1" fill="#e8e8ea"/></svg><div class="dark" style="left:651.500px;top:347px;width:201.500px;height:143px;overflow:hidden"><div class="abs" style="left:22px;top:-8px;width:177.500px;height:34.300px;background:#6d6e72;border-radius:1px"></div><div class="t rtl" style="right:5.500px;top:-2.500px;font-size:7.600px;color:#d4d4d6;font-family:'DejaVu Sans',sans-serif">سلام استاد . کلاس برای بچه های کلاس جامع در پنل</div><div class="t rtl" style="right:5.500px;top:11px;font-size:6.900px;color:#d4d4d6;font-family:'DejaVu Sans',sans-serif">قرار میگیره ؟</div><div class="abs" style="left:104px;top:30.500px;width:95.500px;height:37px;background:#6d6e72;border-radius:1px"></div><div class="t rtl" style="right:5.500px;top:37px;font-size:6.300px;font-weight:bold;color:#ececee;font-family:'DejaVu Sans',sans-serif">بفرین روشنی</div><div class="t rtl" style="right:5.500px;top:53.500px;font-size:7.500px;color:#d4d4d6;font-family:'DejaVu Sans',sans-serif">سلام وقت بخیر</div><div class="abs" style="left:104px;top:71.500px;width:95.500px;height:40px;background:#6d6e72;border-radius:1px"></div></div>
<!-- FOOTER -->
<div class="t rtl" style="left:1px;top:496.500px;font-size:7.200px;color:#c8c8ca;direction:ltr">© اسکای‌روم™</div>
</div>
<!-- NOTIFICATION -->
<div id="notif" class="abs" style="left:641px;top:424px;width:232.500px;height:78.500px;background:rgba(33,33,34,.97);font-family:'Liberation Sans',sans-serif">
 <div class="abs" style="left:14.500px;top:20.500px;width:24px;height:24px;border-radius:50%;background:#0f7ad8"></div>
 <div class="abs" style="left:25.550px;top:25.400px;width:1.900px;height:2px;background:#fff"></div>
 <div class="abs" style="left:25.550px;top:29.200px;width:1.900px;height:10.300px;background:#fff"></div>
 <div class="t" style="left:52px;top:15.500px;font-size:8.800px;font-weight:bold;color:#fff">Bandicam</div>
 <div class="t" style="left:52px;top:28.500px;font-size:9.500px;color:#a9a9a9">Click the tray icon to restore</div>
 <div class="t" style="left:52px;top:41.500px;font-size:9.500px;color:#a9a9a9">Bandicam.</div>
 <div class="t" style="left:52px;top:57.500px;font-size:7.400px;color:#a0a0a0">Bandicam - bdcam.exe</div>
</div>
</body>
</html>
